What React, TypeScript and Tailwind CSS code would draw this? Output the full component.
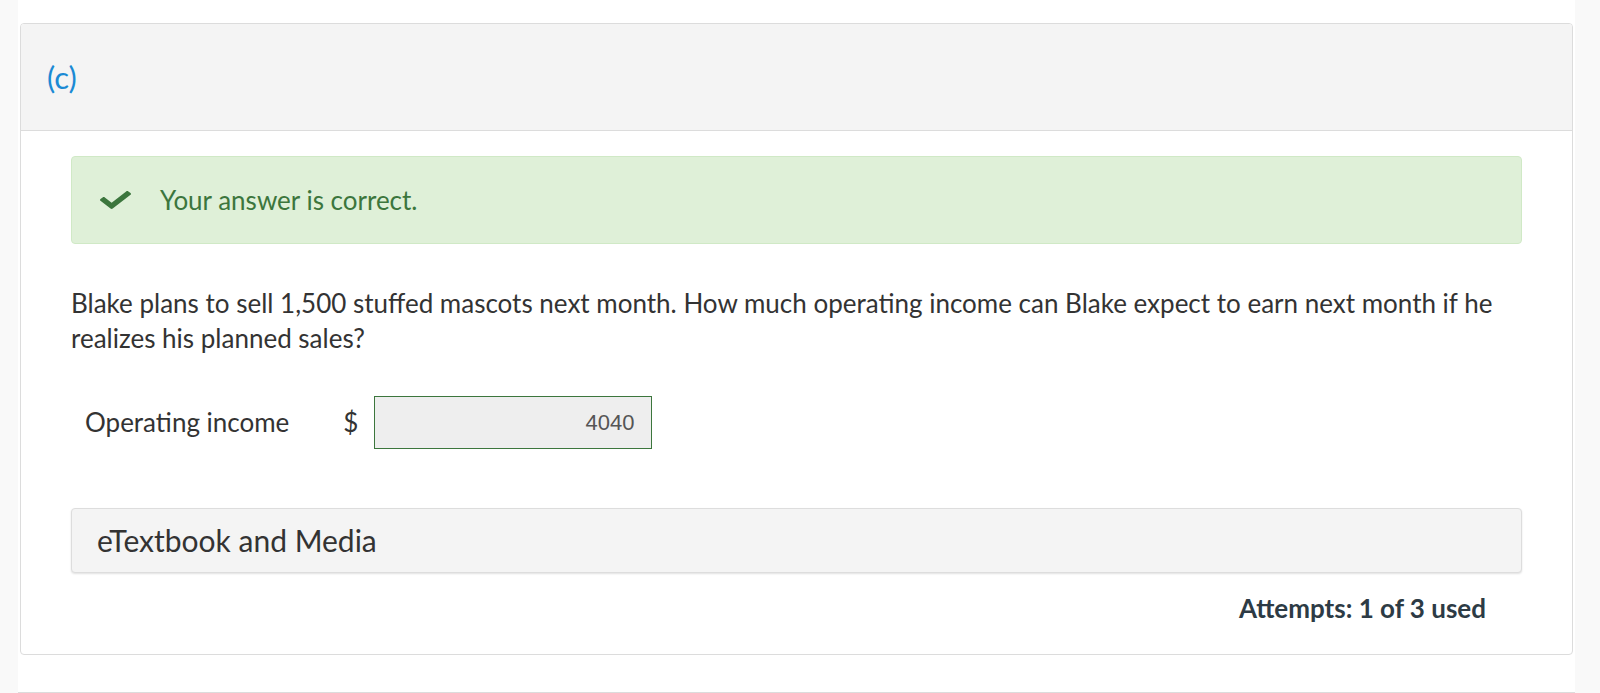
import React from 'react';

function CheckIcon() {
  return (
    <svg viewBox="0 0 512 512" className="w-[31px] h-[24px]" preserveAspectRatio="none">
      <path
        fill="#3c763d"
        d="M173.9 439.4l-166.4-166.4c-10-10-10-26.2 0-36.2l36.2-36.2c10-10 26.2-10 36.2 0L192 312.7 432.1 72.6c10-10 26.2-10 36.2 0l36.2 36.2c10 10 10 26.2 0 36.2l-294.4 294.4c-10 10-26.2 10-36.2 0z"
      />
    </svg>
  );
}

export default function App() {
  return (
    <div className="min-h-[693px] bg-[#f9f9f9] font-['Lato','Open_Sans',sans-serif]">
      <div className="ml-[18px] w-[1557px] bg-white pt-[23px] pb-[37px]">
        {/* Question part card */}
        <div className="ml-[2px] w-[1553px] border border-[#dcdcdc] rounded-[4px] overflow-hidden">
          <div className="h-[107px] bg-[#f4f4f4] border-b border-[#dcdcdc] flex items-center px-[26px]">
            <span className="text-[31px] text-[#1a8ad4]">(c)</span>
          </div>

          <div className="px-[50px] pt-[25px] pb-[30px]">
            <div className="h-[88px] bg-[#dff0d8] border border-[#d0e9c6] rounded-[4px] flex items-center pl-[28px]">
              <CheckIcon />
              <span className="ml-[29px] text-[26px] text-[#3c763d]">Your answer is correct.</span>
            </div>

            <p className="mt-[42px] text-[26px] leading-[35px] text-[#333333]">
              Blake plans to sell 1,500 stuffed mascots next month. How much operating income can Blake expect to earn
              next month if he realizes his planned sales?
            </p>

            <div className="mt-[40px] flex items-center pl-[14px]">
              <span className="text-[26px] text-[#333333]">Operating income</span>
              <span className="ml-[54px] text-[26px] text-[#333333]">$</span>
              <div className="ml-[16px] w-[278px] h-[53px] bg-[#eeeeee] border border-[#3c763d] flex items-center justify-end pr-[17px]">
                <span className="font-['Liberation_Sans',Arial,sans-serif] text-[22px] text-[#555555]">4040</span>
              </div>
            </div>

            <div className="mt-[59px] h-[65px] bg-[#f4f4f4] border border-[#dddddd] rounded-[4px] shadow-[0_1px_2px_rgba(0,0,0,0.12)] flex items-center px-[25px]">
              <span className="text-[30px] text-[#333333]">eTextbook and Media</span>
            </div>

            <div className="mt-[19px] flex justify-end pr-[36px]">
              <span className="text-[26px] leading-[32px] font-bold text-[#2d3b45]">Attempts: 1 of 3 used</span>
            </div>
          </div>
        </div>
      </div>
      <div className="ml-[18px] w-[1557px] border-t border-[#dcdcdc] h-[2px] bg-white" />
    </div>
  );
}
